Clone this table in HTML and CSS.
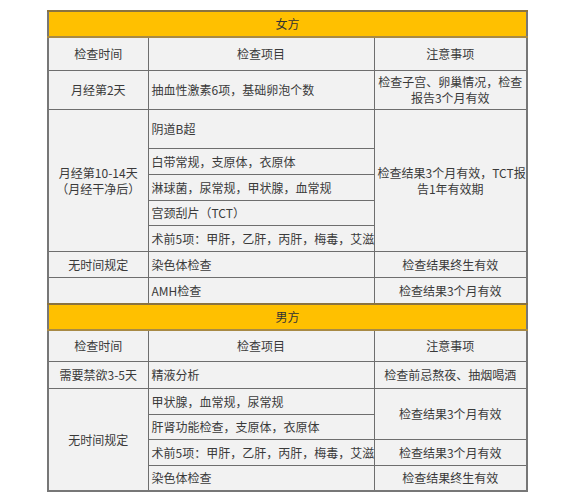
FILE: index.html
```html
<!DOCTYPE html>
<html lang="zh-CN">
<head>
<meta charset="utf-8">
<title>孕前检查</title>
<link rel="stylesheet" href="styles.css">
</head>
<body>
<div class="page">
<table class="exam">
  <colgroup>
    <col class="c1"><col class="c2"><col class="c3">
  </colgroup>
  <tbody>
    <tr class="title"><td colspan="3">女方</td></tr>
    <tr class="head h33"><td>检查时间</td><td class="mid">检查项目</td><td>注意事项</td></tr>
    <tr class="h39"><td class="ctr">月经第2天</td><td class="item">抽血性激素6项，基础卵泡个数</td><td class="ctr two">检查子宫、卵巢情况，检查<br>报告3个月有效</td></tr>
    <tr class="h39"><td class="ctr tight" rowspan="5">月经第10-14天<br>（月经干净后）</td><td class="item">阴道B超</td><td class="ctr two" rowspan="5">检查结果3个月有效，TCT报<br>告1年有效期</td></tr>
    <tr class="h26"><td class="item">白带常规，支原体，衣原体</td></tr>
    <tr class="h26"><td class="item">淋球菌，尿常规，甲状腺，血常规</td></tr>
    <tr class="h25"><td class="item">宫颈刮片（TCT）</td></tr>
    <tr class="h26"><td class="item">术前5项：甲肝，乙肝，丙肝，梅毒，艾滋</td></tr>
    <tr class="h26"><td class="ctr">无时间规定</td><td class="item">染色体检查</td><td class="ctr">检查结果终生有效</td></tr>
    <tr class="h26"><td class="ctr"></td><td class="item">AMH检查</td><td class="ctr">检查结果3个月有效</td></tr>
    <tr class="title"><td colspan="3">男方</td></tr>
    <tr class="head h31"><td>检查时间</td><td class="mid">检查项目</td><td>注意事项</td></tr>
    <tr class="h27"><td class="ctr">需要禁欲3-5天</td><td class="item">精液分析</td><td class="ctr">检查前忌熬夜、抽烟喝酒</td></tr>
    <tr class="h26"><td class="ctr" rowspan="4">无时间规定</td><td class="item">甲状腺，血常规，尿常规</td><td class="ctr" rowspan="2">检查结果3个月有效</td></tr>
    <tr class="h25"><td class="item">肝肾功能检查，支原体，衣原体</td></tr>
    <tr class="h26"><td class="item">术前5项：甲肝，乙肝，丙肝，梅毒，艾滋</td><td class="ctr">检查结果3个月有效</td></tr>
    <tr class="h25"><td class="item">染色体检查</td><td class="ctr">检查结果终生有效</td></tr>
  </tbody>
</table>
</div>
</body>
</html>
```

FILE: styles.css
```css
html, body {
  margin: 0;
  padding: 0;
  background: #ffffff;
}

.page {
  padding: 10px 0 0 47px;
}

.exam {
  border-collapse: collapse;
  table-layout: fixed;
  width: 479px;
  border: 2px solid #777777;
  font-family: "Noto Sans CJK SC", "Microsoft YaHei", sans-serif;
  font-size: 12px;
  color: #3a3a3a;
  background: #f2f2f2;
}

.c1 { width: 100px; }
.c2 { width: 226px; }
.c3 { width: 153px; }

.exam td {
  border: 1px solid #6e6e6e;
  padding: 0 3px;
  vertical-align: middle;
  line-height: 16px;
  white-space: nowrap;
}

.exam .title td {
  height: 24px;
  background: #ffc000;
  text-align: center;
  border-top: 2px solid #8a7340;
  border-bottom: 2px solid #a88a45;
  color: #333;
}

.exam .head td {
  text-align: center;
}

.ctr {
  text-align: center;
}

.item {
  text-align: left;
}

.two {
  line-height: 18px;
}

.tight {
  line-height: 14px;
}

.h25 td { height: 24px; }
.h26 td { height: 25px; }
.h27 td { height: 26px; }
.h31 td { height: 30px; }
.h33 td { height: 32px; }
.h39 td { height: 38px; }
```
